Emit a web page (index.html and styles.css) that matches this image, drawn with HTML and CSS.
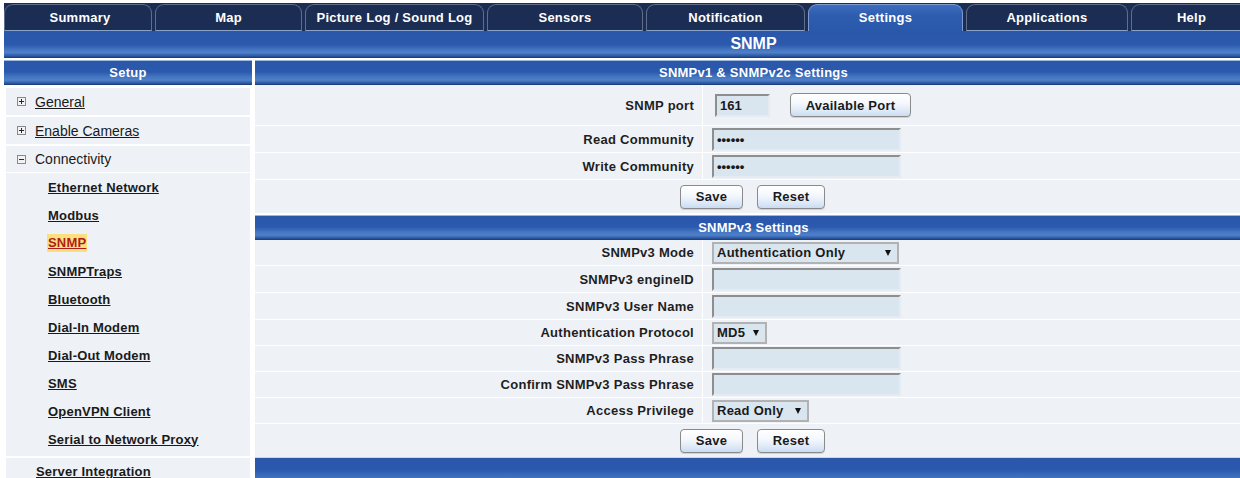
FILE: index.html
```html
<!DOCTYPE html>
<html lang="en">
<head>
<meta charset="utf-8">
<title>Settings - SNMP</title>
<link rel="stylesheet" href="styles.css">
</head>
<body>
<div class="page">
  <nav class="tabs">
    <a class="tab tab--summary" href="#">Summary</a>
    <a class="tab tab--map" href="#">Map</a>
    <a class="tab tab--log" href="#">Picture Log / Sound Log</a>
    <a class="tab tab--sensors" href="#">Sensors</a>
    <a class="tab tab--notify" href="#">Notification</a>
    <a class="tab tab--settings is-active" href="#">Settings</a>
    <a class="tab tab--apps" href="#">Applications</a>
    <a class="tab tab--help" href="#">Help</a>
  </nav>

  <header class="titlebar">
    <span class="titlebar-spacer"></span>
    <h1 class="titlebar-text">SNMP</h1>
  </header>

  <div class="main">
    <aside class="sidebar">
      <div class="bar-head">Setup</div>
      <ul class="tree">
        <li class="node">
          <div class="node-head">
            <svg class="toggle" width="9" height="9" viewBox="0 0 9 9"><rect x="0.5" y="0.5" width="8" height="8" fill="#f2f2f2" stroke="#8a8a8a"/><rect x="2" y="4" width="5" height="1" fill="#2a2a2a"/><rect x="4" y="2" width="1" height="5" fill="#2a2a2a"/></svg>
            <a class="node-link" href="#">General</a>
          </div>
        </li>
        <li class="node">
          <div class="node-head">
            <svg class="toggle" width="9" height="9" viewBox="0 0 9 9"><rect x="0.5" y="0.5" width="8" height="8" fill="#f2f2f2" stroke="#8a8a8a"/><rect x="2" y="4" width="5" height="1" fill="#2a2a2a"/><rect x="4" y="2" width="1" height="5" fill="#2a2a2a"/></svg>
            <a class="node-link" href="#">Enable Cameras</a>
          </div>
        </li>
        <li class="node node--open">
          <div class="node-head node-head--open">
            <svg class="toggle" width="9" height="9" viewBox="0 0 9 9"><rect x="0.5" y="0.5" width="8" height="8" fill="#f2f2f2" stroke="#8a8a8a"/><rect x="2" y="4" width="5" height="1" fill="#2a2a2a"/></svg>
            <span class="node-title">Connectivity</span>
          </div>
          <ul class="subtree">
            <li><a class="leaf" href="#">Ethernet Network</a></li>
            <li><a class="leaf" href="#">Modbus</a></li>
            <li><a class="leaf is-current" href="#">SNMP</a></li>
            <li><a class="leaf" href="#">SNMPTraps</a></li>
            <li><a class="leaf" href="#">Bluetooth</a></li>
            <li><a class="leaf" href="#">Dial-In Modem</a></li>
            <li><a class="leaf" href="#">Dial-Out Modem</a></li>
            <li><a class="leaf" href="#">SMS</a></li>
            <li><a class="leaf" href="#">OpenVPN Client</a></li>
            <li><a class="leaf" href="#">Serial to Network Proxy</a></li>
          </ul>
        </li>
        <li class="node">
          <div class="node-head node-head--plain">
            <a class="leaf" href="#">Server Integration</a>
          </div>
        </li>
      </ul>
    </aside>

    <main class="content">
      <section class="panel">
        <div class="bar-head">SNMPv1 &amp; SNMPv2c Settings</div>
        <div class="frow frow--tall">
          <label class="flabel" for="port">SNMP port</label>
          <div class="fvalue">
            <input class="field field--port" id="port" type="text" value="161">
            <button class="btn btn--wide" type="button">Available Port</button>
          </div>
        </div>
        <div class="frow">
          <label class="flabel" for="rcomm">Read Community</label>
          <div class="fvalue"><input class="field" id="rcomm" type="password" value="public"></div>
        </div>
        <div class="frow">
          <label class="flabel" for="wcomm">Write Community</label>
          <div class="fvalue"><input class="field" id="wcomm" type="password" value="public"></div>
        </div>
        <div class="actions">
          <button class="btn btn--save" type="button">Save</button>
          <button class="btn btn--reset" type="button">Reset</button>
        </div>
      </section>

      <section class="panel">
        <div class="bar-head">SNMPv3 Settings</div>
        <div class="frow">
          <label class="flabel" for="mode">SNMPv3 Mode</label>
          <div class="fvalue">
            <span class="select select--mode"><select id="mode"><option>Authentication Only</option></select></span>
          </div>
        </div>
        <div class="frow">
          <label class="flabel" for="engine">SNMPv3 engineID</label>
          <div class="fvalue"><input class="field" id="engine" type="text"></div>
        </div>
        <div class="frow">
          <label class="flabel" for="user">SNMPv3 User Name</label>
          <div class="fvalue"><input class="field" id="user" type="text"></div>
        </div>
        <div class="frow">
          <label class="flabel" for="proto">Authentication Protocol</label>
          <div class="fvalue">
            <span class="select select--proto"><select id="proto"><option>MD5</option></select></span>
          </div>
        </div>
        <div class="frow">
          <label class="flabel" for="pass">SNMPv3 Pass Phrase</label>
          <div class="fvalue"><input class="field" id="pass" type="password"></div>
        </div>
        <div class="frow">
          <label class="flabel" for="pass2">Confirm SNMPv3 Pass Phrase</label>
          <div class="fvalue"><input class="field" id="pass2" type="password"></div>
        </div>
        <div class="frow">
          <label class="flabel" for="priv">Access Privilege</label>
          <div class="fvalue">
            <span class="select select--priv"><select id="priv"><option>Read Only</option></select></span>
          </div>
        </div>
        <div class="actions">
          <button class="btn btn--save" type="button">Save</button>
          <button class="btn btn--reset" type="button">Reset</button>
        </div>
      </section>

      <div class="bar-foot"></div>
    </main>
  </div>
</div>
</body>
</html>
```

FILE: styles.css
```css
* {
  box-sizing: border-box;
}

html,
body {
  margin: 0;
  overflow: hidden;
  background: #ffffff;
}

body {
  font-family: "Liberation Sans", Arial, sans-serif;
  font-size: 13px;
  color: #1a1a1a;
}

.page {
  width: 1252px;
  padding: 3px 0 0 4px;
}

/* ---- top navigation tabs ---- */
.tabs {
  display: flex;
  align-items: flex-end;
  gap: 3px;
  height: 28px;
  background: #1b2d52;
}

.tab {
  display: flex;
  align-items: center;
  justify-content: center;
  height: 27px;
  padding-bottom: 1px;
  color: #ffffff;
  font-weight: bold;
  font-size: 13px;
  letter-spacing: 0.25px;
  text-decoration: none;
  background: #1b2d52;
  border: 1px solid #5f6f8b;
  border-bottom-color: #8aa3cb;
  border-radius: 9px 9px 0 0;
}

.tab--summary { width: 148px; padding-left: 4px; }
.tab--map { width: 147px; }
.tab--log { width: 179px; }
.tab--sensors { width: 156px; }
.tab--notify { width: 159px; }
.tab--settings { width: 155px; }
.tab--apps { width: 162px; }
.tab--help { flex: 1; }

.tab.is-active {
  background: linear-gradient(to bottom, #3d6dbf 0%, #2e5db0 40%, #2a58ab 100%);
  border-color: #7d9bd0;
  border-bottom: 0;
}

/* ---- page title bar ---- */
.titlebar {
  display: flex;
  height: 27px;
  margin-bottom: 2px;
  background: linear-gradient(to bottom, #2a57aa 0%, #2b59ad 50%, #4576c2 70%, #4f80c8 80%, #2c5aa6 92%, #1a3670 100%);
}

.titlebar-spacer {
  width: 251px;
}

.titlebar-text {
  flex: 1;
  margin: 0;
  padding-top: 4px;
  text-align: center;
  color: #ffffff;
  font-size: 16px;
  font-weight: bold;
}

/* ---- shared blue bars ---- */
.bar-head,
.bar-foot {
  height: 25px;
  border-top: 1px solid #9cb6dd;
  background: linear-gradient(to bottom, #2a57aa 0%, #2b59ad 45%, #4274c0 65%, #4f80c8 80%, #2c5aa6 92%, #1a3670 100%);
  color: #ffffff;
  font-weight: bold;
  font-size: 13px;
  letter-spacing: 0.25px;
  text-align: center;
  line-height: 23px;
}

.bar-foot {
  height: 30px;
  border-top-color: #c9d6e8;
  background: linear-gradient(to bottom, #2a57aa 0%, #2b59ad 40%, #4274c0 70%, #4f80c8 90%);
}

.main {
  display: flex;
  gap: 3px;
  align-items: flex-start;
}

/* ---- setup sidebar ---- */
.sidebar {
  width: 248px;
  flex: none;
}

.tree,
.subtree {
  list-style: none;
  margin: 0;
  padding: 0;
}

.tree {
  padding: 0 2px;
}

.node {
  margin-top: 2px;
  background: #eef2f7;
}

.node:first-child {
  margin-top: 3px;
}

.node-head {
  display: flex;
  align-items: center;
  gap: 9px;
  height: 27px;
  padding-left: 11px;
  font-size: 14px;
}

.node-head--open {
  height: 27px;
  border-bottom: 1px solid #ffffff;
}

.node-head--plain {
  padding-left: 30px;
}

.toggle {
  display: block;
  flex: none;
}

.node-link {
  color: #1a1a1a;
  text-decoration: underline;
}

.node-title {
  color: #1a1a1a;
}

.subtree {
  padding-bottom: 3px;
}

.subtree li {
  display: flex;
  align-items: center;
  height: 28px;
  padding-left: 42px;
}

.leaf {
  color: #1a1a1a;
  font-size: 13px;
  font-weight: bold;
  letter-spacing: 0.2px;
  text-decoration: underline;
}

.leaf.is-current {
  padding: 1px 1px 2px;
  margin-left: -1px;
  color: #b01c1c;
  background: #fbe07c;
}

/* ---- settings forms ---- */
.content {
  flex: 1;
  min-width: 0;
}

.panel {
  margin-bottom: 2px;
}

.panel:last-of-type {
  margin-bottom: 0;
}

.frow {
  display: grid;
  grid-template-columns: 448px 1fr;
  height: 26px;
  background: #eef2f7;
  border-bottom: 1px solid #ffffff;
}

.frow--tall {
  height: 41px;
}

.frow:nth-child(3),
.frow:nth-child(4) {
  height: 27px;
}

.flabel {
  display: flex;
  align-items: center;
  justify-content: flex-end;
  padding-right: 8px;
  border-right: 1px solid #ffffff;
  font-weight: bold;
  letter-spacing: 0.27px;
  color: #1e1e1e;
}

.fvalue {
  display: flex;
  align-items: center;
  padding-left: 9px;
}

.field {
  width: 189px;
  height: 23px;
  margin: 0;
  padding: 0 3px;
  background: #d9e5ef;
  border: 2px solid;
  border-color: #8e8e8e #e4ebf2 #e4ebf2 #8e8e8e;
  font-family: inherit;
  font-size: 13px;
  font-weight: bold;
  color: #1a1a1a;
  outline: none;
}

.field--port {
  width: 55px;
  margin-left: 3px;
}

.btn {
  height: 24px;
  margin: 0;
  padding: 0;
  border: 1px solid #8a8a8a;
  border-radius: 4px;
  background: linear-gradient(to bottom, #ffffff 0%, #f3f7fc 45%, #dae7f6 80%, #c9dcf2 100%);
  box-shadow: 0 1px 0 #c7d3e2;
  font-family: inherit;
  font-size: 13px;
  font-weight: bold;
  letter-spacing: 0.25px;
  color: #1a1a1a;
}

.btn--wide {
  width: 121px;
  margin-left: 20px;
}

.btn--save {
  width: 63px;
}

.btn--reset {
  width: 68px;
}

.actions {
  display: flex;
  justify-content: center;
  align-items: center;
  gap: 14px;
  height: 33px;
  padding-right: 2px;
  background: #eef2f7;
}

/* select boxes with a drawn arrow */
.select {
  position: relative;
  display: inline-block;
}

.select select {
  display: block;
  height: 22px;
  margin: 0;
  padding: 0 18px 0 3px;
  -webkit-appearance: none;
  appearance: none;
  background: #d9e5ef;
  border: 2px solid #b2b2b2;
  border-radius: 0;
  font-family: inherit;
  font-size: 13px;
  font-weight: bold;
  letter-spacing: 0.25px;
  color: #1a1a1a;
}

.select::after {
  content: "";
  position: absolute;
  top: 8px;
  right: 8px;
  width: 0;
  height: 0;
  border-left: 3.5px solid transparent;
  border-right: 3.5px solid transparent;
  border-top: 6px solid #111111;
  pointer-events: none;
}

.select--mode select { width: 187px; }
.select--proto select { width: 55px; }
.select--priv select { width: 97px; }
```
